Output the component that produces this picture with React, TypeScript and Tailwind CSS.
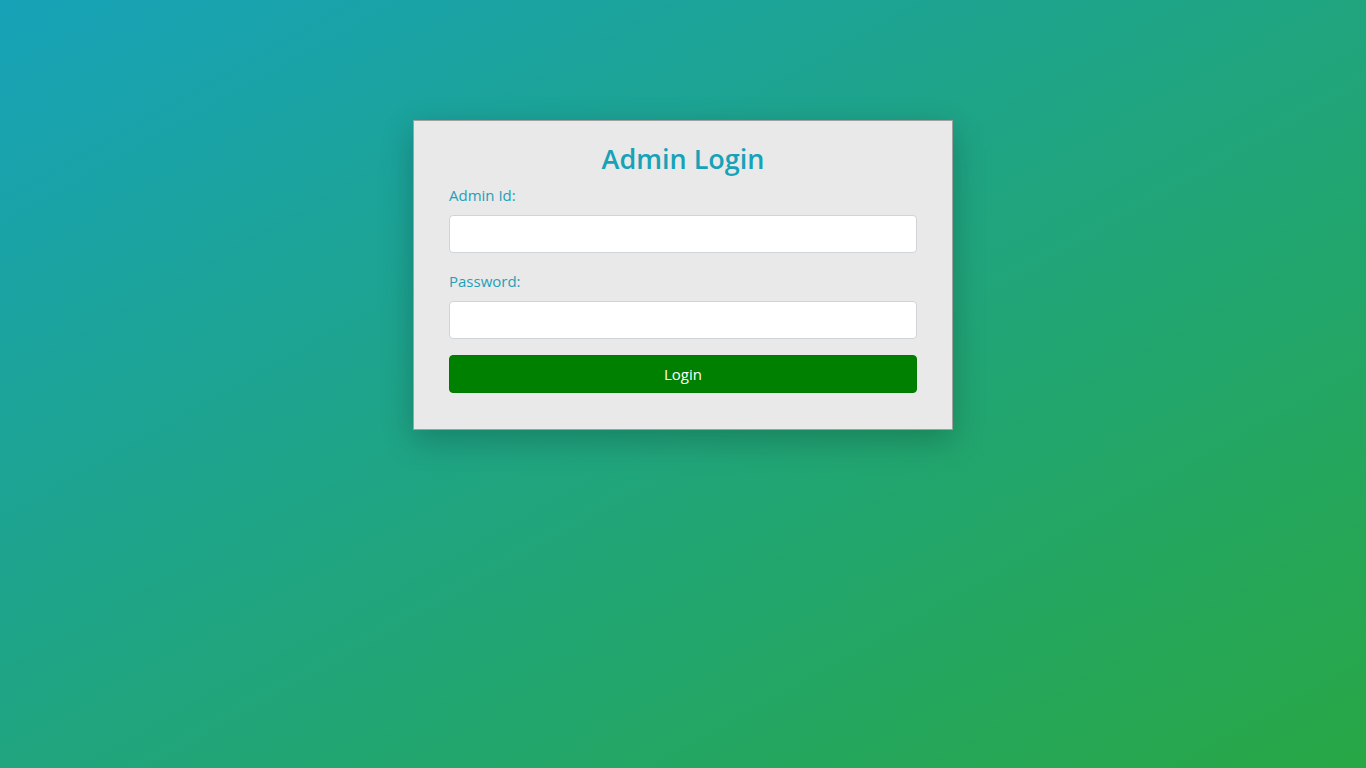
export default function App() {
  return (
    <div
      className="min-h-screen w-full bg-[linear-gradient(to_bottom_right,#17a2b8,#28a745)] pt-[120px]"
      style={{ fontFamily: '"Open Sans", "Noto Sans", sans-serif' }}
    >
      <div className="mx-auto w-[540px] border border-[#a0a0a0] bg-[#e9e9e9] px-[35px] pt-[21px] pb-[36px] shadow-[0_10px_30px_rgba(0,0,0,0.22)]">
        <h2 className="text-center text-[27px] leading-[34px] font-semibold text-[#17a2b8] mb-[7px]">
          Admin Login
        </h2>
        <div className="mb-[16px]">
          <label className="block text-[15px] leading-[24px] text-[#1fa0b8] mb-[8px]">Admin Id:</label>
          <input
            type="text"
            className="block h-[38px] w-full rounded-[4px] border border-[#ced4da] bg-white px-3 outline-none"
          />
        </div>
        <div className="mb-[16px]">
          <label className="block text-[15px] leading-[24px] text-[#1fa0b8] mb-[8px]">Password:</label>
          <input
            type="password"
            className="block h-[38px] w-full rounded-[4px] border border-[#ced4da] bg-white px-3 outline-none"
          />
        </div>
        <button className="block h-[38px] w-full rounded-[4px] border border-[#007a00] bg-[#008000] text-[15px] text-white">
          Login
        </button>
      </div>
    </div>
  );
}
